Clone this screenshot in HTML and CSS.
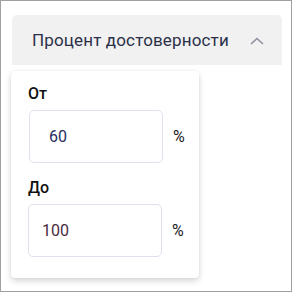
FILE: index.html
```html
<!DOCTYPE html>
<html lang="ru">
<head>
<meta charset="utf-8">
<link rel="stylesheet" href="styles.css">
</head>
<body>
<div class="frame">
  <div class="header">
    <span class="title">Процент достоверности</span>
    <svg class="chev" width="14" height="8" viewBox="0 0 14 8"><path d="M1 7 L7 1.5 L13 7" fill="none" stroke="#8b909c" stroke-width="1.6"/></svg>
  </div>
  <div class="card">
    <div class="label">От</div>
    <div class="row">
      <div class="input in1">60</div>
      <span class="pct">%</span>
    </div>
    <div class="label label2">До</div>
    <div class="row">
      <div class="input in2">100</div>
      <span class="pct">%</span>
    </div>
  </div>
</div>
</body>
</html>
```
FILE: styles.css
```css
html, body { margin: 0; padding: 0; background: #fff; }
body { font-family: Roboto, "Noto Sans", sans-serif; }
.frame {
  width: 290px; height: 290px;
  border: 1px solid #a0a0a0;
  position: relative;
}
.header {
  margin: 14px 9px 0 11px;
  height: 50px;
  background: #f1f1f1;
  border-radius: 5px 5px 0 0;
  display: flex; align-items: center;
  padding: 0 18px 0 20px;
  justify-content: space-between;
}
.title { font-size: 17px; color: #2b3048; letter-spacing: 0.15px; }
.chev { margin-top: 1px; }
.card {
  margin: 6px 0 0 10px;
  width: 188px;
  height: 207px;
  background: #fff;
  border-radius: 4px;
  box-shadow: 0 3px 6px rgba(0,0,0,0.16), 0 0 3px rgba(0,0,0,0.06);
  padding: 13px 0 0 17px;
  box-sizing: border-box;
}
.label { font-size: 16px; font-weight: 500; color: #111; line-height: 20px; }
.label2 { margin-top: 15px; }
.row { display: flex; align-items: center; margin-top: 6px; }
.input {
  width: 134px; height: 53px; box-sizing: border-box;
  border: 1px solid #e2e0ec; border-radius: 5px;
  display: flex; align-items: center;
  font-size: 16px; color: #263060;
}
.in1 { padding-left: 19px; margin-left: 1px; }
.in2 { padding-left: 13px; color: #4a2a40; }
.pct { margin-left: 10px; font-size: 16px; color: #222; }
```
